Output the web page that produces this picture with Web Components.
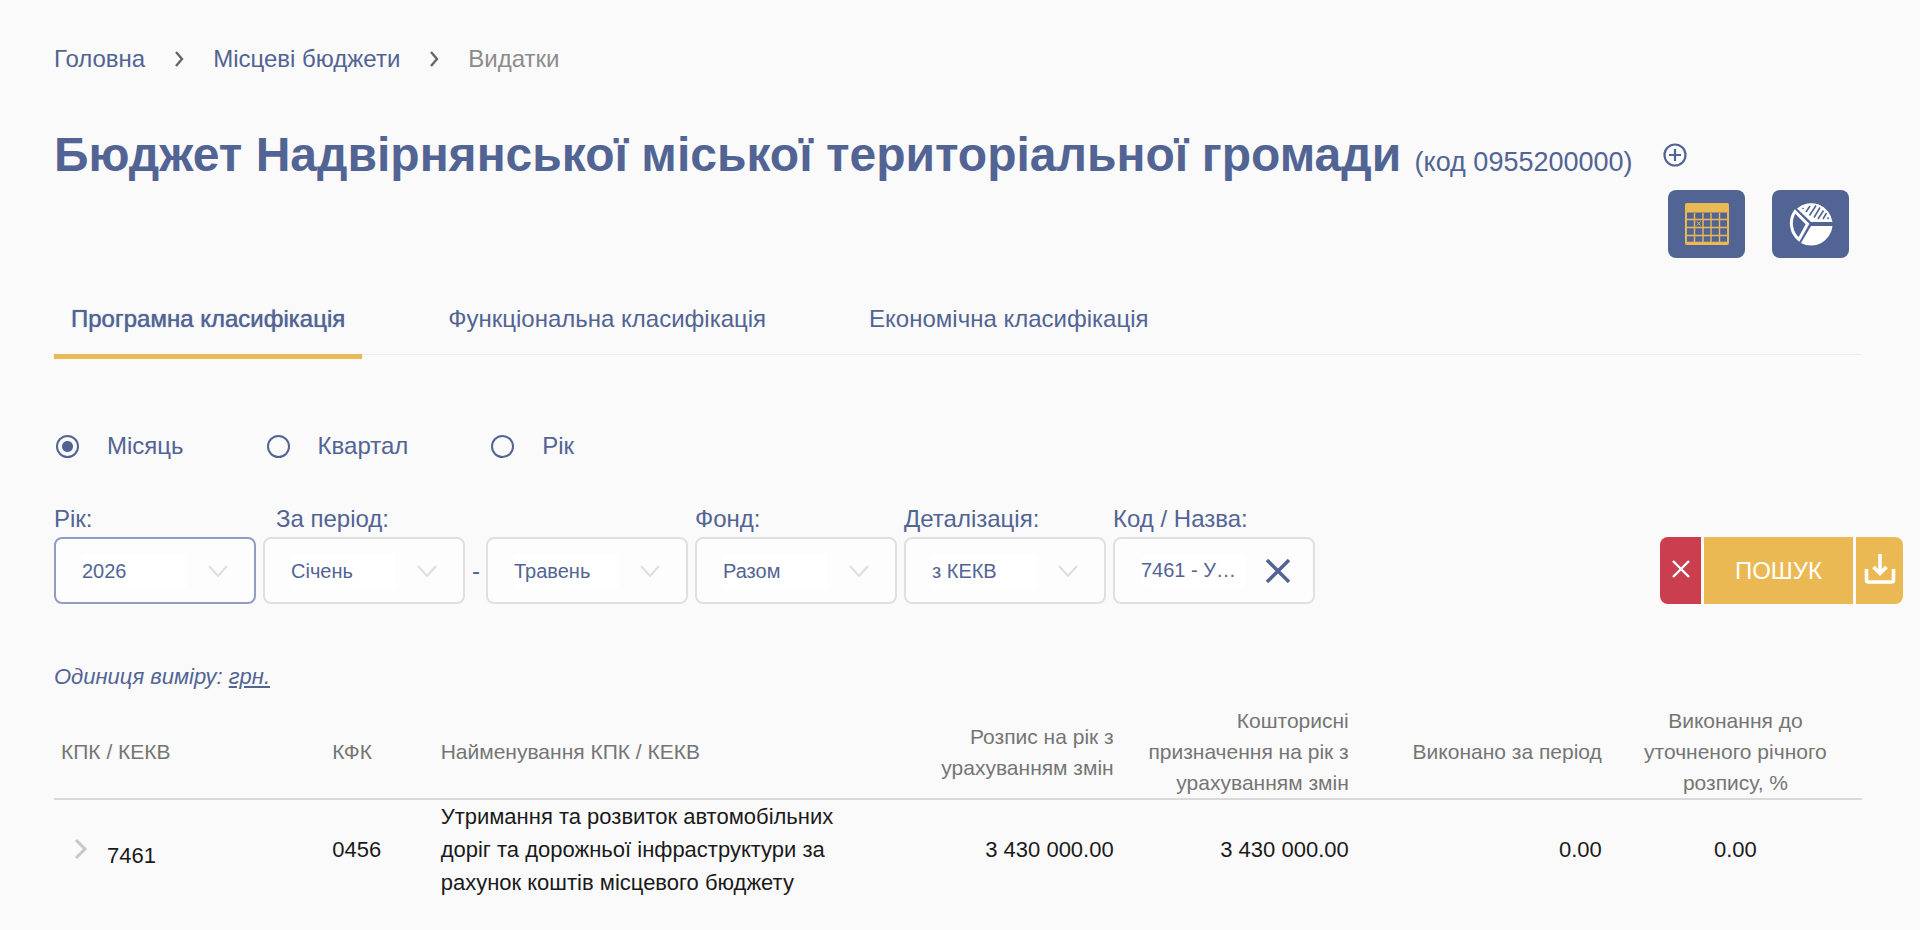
<!DOCTYPE html>
<html lang="uk">
<head>
  <meta charset="utf-8">
  <meta name="viewport" content="width=device-width, initial-scale=1">
  <title>Видатки місцевого бюджету</title>
  <style>
    body {
      margin: 0;
      background-color: #fafafa;
      color: #526494;
      font-family: "Liberation Sans", Arial, sans-serif;
      font-size: 24px;
      line-height: 32px;
    }
  </style>
</head>
<body>
  <budget-page></budget-page>

  <script>
    class BreadCrumbs extends HTMLElement {
      constructor() {
        super();
        this.attachShadow({ mode: 'open' });
      }

      connectedCallback() {
        this.shadowRoot.innerHTML = `
          <style>
            :host {
              display: block;
            }

            nav {
              display: flex;
              align-items: center;
              gap: 29px;
            }

            a {
              color: inherit;
              text-decoration: none;
            }

            span {
              color: #8c8c8c;
            }
          </style>

          <nav>
            <a href="#home">Головна</a>
            <svg width="10" height="16" viewBox="0 0 10 16" fill="none" stroke="#666" stroke-width="2.4"><path d="M2 1l6 7-6 7"/></svg>
            <a href="#local">Місцеві бюджети</a>
            <svg width="10" height="16" viewBox="0 0 10 16" fill="none" stroke="#666" stroke-width="2.4"><path d="M2 1l6 7-6 7"/></svg>
            <span>Видатки</span>
          </nav>`;
      }
    }

    class BudgetTitle extends HTMLElement {
      constructor() {
        super();
        this.attachShadow({ mode: 'open' });
      }

      connectedCallback() {
        this.shadowRoot.innerHTML = `
          <style>
            :host {
              display: flex;
              align-items: center;
              gap: 30px;
            }

            h1 {
              margin: 0;
              font-size: 48px;
              line-height: 56px;
            }

            small {
              font-size: 27px;
              font-weight: normal;
            }

            button {
              display: flex;
              padding: 0 0 8px;
              border: 0;
              background: none;
              color: inherit;
              cursor: pointer;
            }
          </style>

          <h1><slot></slot> <small>(код ${this.getAttribute('code')})</small></h1>
          <button type="button" aria-label="Додати">
            <svg width="24" height="24" viewBox="0 0 24 24" fill="none" stroke="currentColor" stroke-width="2.200"><circle cx="12" cy="12" r="10.500"/><path d="M12 6v12M6 12h12"/></svg>
          </button>`;
      }
    }

    class ViewSwitch extends HTMLElement {
      constructor() {
        super();
        this.attachShadow({ mode: 'open' });
      }

      connectedCallback() {
        this.shadowRoot.innerHTML = `
          <style>
            :host {
              display: flex;
              justify-content: flex-end;
              gap: 27px;
              padding-right: 13px;
            }

            button {
              display: flex;
              align-items: center;
              justify-content: center;
              width: 77px;
              height: 68px;
              padding: 0;
              border: 0;
              border-radius: 8px;
              background-color: #526494;
              cursor: pointer;
            }
          </style>

          <button type="button" aria-label="Таблиця">
            <svg width="44" height="42" viewBox="0 0 44 42" fill="none" stroke="#ebb954">
              <rect x="1" y="1" width="42" height="40" rx="1" stroke-width="2"/>
              <path d="M1 1h42v8H1z" fill="#ebb954"/>
              <path d="M9.500 10v30M18 10v30M26 10v30M34.500 10v30M1 16.500h42M1 24.500h42M1 32.500h42M1 39.500h42" stroke-width="1.400"/>
              <path d="M12 18.500l3.500 4M15.500 18.500l-3.500 4"/>
            </svg>
          </button>
          <button type="button" aria-label="Діаграма">
            <svg width="44" height="46" viewBox="0 0 44 46">
              <path d="M22 21L8 7.500a21.500 21.500 0 0 1 35.500 13.500z" fill="#fff"/>
              <path d="M22 25h21.500A21.500 21.500 0 0 1 12 42z" fill="#fff"/>
              <path d="M6 10.500L18.500 23l-8.500 15.500A21 21 0 0 1 6 10.500z" fill="none" stroke="#fff" stroke-width="3"/>
              <path d="M13.500 8l1-1M17 11l4-6M20.500 14.500l6.500-10M25 16.500l6-10M29 18l5.500-8.500M34 18l3.500-6M38.500 18l1-1.500" stroke="#526494" stroke-width="1.600"/>
            </svg>
          </button>`;
      }
    }

    class TabList extends HTMLElement {
      constructor() {
        super();
        this.attachShadow({ mode: 'open' });
      }

      connectedCallback() {
        this.shadowRoot.innerHTML = `
          <style>
            :host {
              display: block;
            }

            div {
              display: flex;
              gap: 69px;
              height: 54px;
              border-bottom: 1px solid #ececf2;
            }

            button {
              height: 59px;
              padding: 0 17px 17px;
              border: 0;
              border-bottom: 5px solid transparent;
              background: none;
              color: inherit;
              font: inherit;
              cursor: pointer;
            }

            button[aria-selected="true"] {
              border-color: #ebb954;
              text-shadow: 0 0 1px currentColor;
            }
          </style>

          <div role="tablist">
            <button type="button" role="tab" aria-selected="true">Програмна класифікація</button>
            <button type="button" role="tab" aria-selected="false">Функціональна класифікація</button>
            <button type="button" role="tab" aria-selected="false">Економічна класифікація</button>
          </div>`;
      }
    }

    class PeriodKind extends HTMLElement {
      constructor() {
        super();
        this.attachShadow({ mode: 'open' });
      }

      connectedCallback() {
        this.shadowRoot.innerHTML = `
          <style>
            :host {
              display: flex;
              gap: 83px;
              padding-left: 2px;
            }

            label {
              display: flex;
              align-items: center;
              gap: 28px;
            }

            input {
              appearance: none;
              width: 23px;
              height: 23px;
              margin: 0;
              border: 2px solid #526494;
              border-radius: 50%;
            }

            input:checked {
              background: radial-gradient(circle, #526494 0 5px, transparent 6px);
            }
          </style>

          <label><input type="radio" name="kind" checked>Місяць</label>
          <label><input type="radio" name="kind">Квартал</label>
          <label><input type="radio" name="kind">Рік</label>`;
      }
    }

    class SelectField extends HTMLElement {
      constructor() {
        super();
        this.attachShadow({ mode: 'open' });
      }

      connectedCallback() {
        const label = this.getAttribute('label');
        this.shadowRoot.innerHTML = `
          <style>
            :host {
              display: flex;
              flex-direction: column;
              justify-content: flex-end;
              width: 202px;
            }

            label {
              line-height: 36px;
            }

            :host([indent]) label {
              padding-left: 13px;
            }

            .box {
              display: grid;
              align-items: center;
              height: 67px;
              box-sizing: border-box;
              border: 2px solid #e0e0e0;
              border-radius: 8px;
              background-color: #fdfdfd;
            }

            :host([active]) .box {
              border-color: #8f9dc4;
            }

            select {
              grid-area: 1 / 1;
              appearance: none;
              height: 63px;
              padding: 0 60px 0 26px;
              border: 0;
              outline: 0;
              background: linear-gradient(#fff, #fff) 26px center / 104px 34px no-repeat;
              color: inherit;
              font-family: inherit;
              font-size: 20px;
            }

            svg {
              grid-area: 1 / 1;
              justify-self: end;
              margin-right: 26px;
              pointer-events: none;
            }
          </style>

          ${label ? `<label for="field">${label}</label>` : ''}
          <div class="box">
            <select id="field" aria-label="${label || 'По'}"><option>${this.getAttribute('value')}</option></select>
            <svg width="20" height="12" viewBox="0 0 20 12" fill="none" stroke="#dedede" stroke-width="2"><path d="M1 1l9 10 9-10"/></svg>
          </div>`;
      }
    }

    class CodeField extends HTMLElement {
      constructor() {
        super();
        this.attachShadow({ mode: 'open' });
      }

      connectedCallback() {
        this.shadowRoot.innerHTML = `
          <style>
            :host {
              display: block;
              width: 202px;
            }

            label {
              display: block;
              line-height: 36px;
            }

            div {
              display: flex;
              align-items: center;
              justify-content: space-between;
              height: 67px;
              box-sizing: border-box;
              padding: 0 23px 0 26px;
              border: 2px solid #e0e0e0;
              border-radius: 8px;
              background-color: #fdfdfd;
            }

            input {
              width: 104px;
              height: 34px;
              padding: 0;
              border: 0;
              border-radius: 8px;
              outline: 0;
              background: #fff;
              color: inherit;
              font-family: inherit;
              font-size: 20px;
            }

            button {
              display: flex;
              padding: 0;
              border: 0;
              background: none;
              color: inherit;
              cursor: pointer;
            }
          </style>

          <label for="code">${this.getAttribute('label')}</label>
          <div>
            <input id="code" type="text" value="${this.getAttribute('value')}">
            <button type="button" aria-label="Очистити">
              <svg width="24" height="24" viewBox="0 0 24 24" fill="none" stroke="currentColor" stroke-width="3.400"><path d="M1 1l22 22M23 1L1 23"/></svg>
            </button>
          </div>`;
      }
    }

    class FilterActions extends HTMLElement {
      constructor() {
        super();
        this.attachShadow({ mode: 'open' });
      }

      connectedCallback() {
        this.shadowRoot.innerHTML = `
          <style>
            :host {
              display: flex;
              gap: 3px;
              height: 67px;
            }

            button {
              display: flex;
              align-items: center;
              justify-content: center;
              padding: 0;
              border: 0;
              background-color: #ebb954;
              color: #fff;
              font: inherit;
              cursor: pointer;
            }

            .reset {
              width: 41px;
              padding-bottom: 4px;
              border-radius: 8px 0 0 8px;
              background-color: #cb3e4f;
            }

            .search {
              width: 149px;
            }

            .download {
              width: 47px;
              padding-bottom: 4px;
              border-radius: 0 8px 8px 0;
            }
          </style>

          <button class="reset" type="button" aria-label="Скинути">
            <svg width="18" height="18" viewBox="0 0 18 18" fill="none" stroke="currentColor" stroke-width="2.400"><path d="M1 1l16 16M17 1L1 17"/></svg>
          </button>
          <button class="search" type="submit">ПОШУК</button>
          <button class="download" type="button" aria-label="Завантажити">
            <svg width="32" height="32" viewBox="0 0 32 32" fill="none" stroke="currentColor" stroke-width="3.600"><path d="M16 1v20M9.500 14l6.500 6.500 6.500-6.500M2.500 16v11q0 2 2 2h23q2 0 2-2V16"/></svg>
          </button>`;
      }
    }

    class BudgetTable extends HTMLElement {
      constructor() {
        super();
        this.attachShadow({ mode: 'open' });
      }

      connectedCallback() {
        this.shadowRoot.innerHTML = `
          <style>
            :host {
              display: block;
            }

            table {
              width: 100%;
              table-layout: fixed;
              border-collapse: collapse;
            }

            th, td {
              padding: 0 7px;
              text-align: left;
              white-space: nowrap;
            }

            th {
              border-bottom: 2px solid #d9d9d9;
              color: #757575;
              font-size: 21px;
              font-weight: normal;
              line-height: 31px;
            }

            td {
              color: #1a1a1a;
              font-size: 22px;
              line-height: 33px;
            }

            .number {
              text-align: right;
            }

            .percent {
              text-align: center;
            }

            .code {
              display: flex;
              align-items: center;
              gap: 19px;
              padding: 12px 0 0 13px;
            }

            button {
              display: flex;
              padding: 0 0 14px;
              border: 0;
              background: none;
              cursor: pointer;
            }
          </style>

          <table>
            <colgroup>
              <col style="width: 15%">
              <col style="width: 6%">
              <col style="width: 25%">
              <col style="width: 13%">
              <col style="width: 13%">
              <col style="width: 14%">
              <col style="width: 14%">
            </colgroup>
            <thead>
              <tr>
                <th>КПК / КЕКВ</th>
                <th>КФК</th>
                <th>Найменування КПК / КЕКВ</th>
                <th class="number">Розпис на рік з<br>урахуванням змін</th>
                <th class="number">Кошторисні<br>призначення на рік з<br>урахуванням змін</th>
                <th class="number">Виконано за період</th>
                <th class="percent">Виконання до<br>уточненого річного<br>розпису, %</th>
              </tr>
            </thead>
            <tbody>
              <tr>
                <td>
                  <div class="code">
                    <button type="button" aria-label="Розгорнути"><svg width="14" height="20" viewBox="0 0 14 20" fill="none" stroke="#c8c8c8" stroke-width="3"><path d="M2 1l9 9-9 9"/></svg></button>
                    7461
                  </div>
                </td>
                <td>0456</td>
                <td>Утримання та розвиток автомобільних<br>доріг та дорожньої інфраструктури за<br>рахунок коштів місцевого бюджету</td>
                <td class="number">3 430 000.00</td>
                <td class="number">3 430 000.00</td>
                <td class="number">0.00</td>
                <td class="percent">0.00</td>
              </tr>
            </tbody>
          </table>`;
      }
    }

    class BudgetPage extends HTMLElement {
      constructor() {
        super();
        this.attachShadow({ mode: 'open' });
      }

      connectedCallback() {
        this.shadowRoot.innerHTML = `
          <style>
            :host {
              display: block;
              padding: 43px 58px 20px 54px;
            }

            budget-title {
              margin-top: 52px;
            }

            tab-list {
              margin-top: 42px;
            }

            period-kind {
              margin-top: 75px;
            }

            form {
              display: flex;
              align-items: flex-end;
              gap: 7px;
              margin-top: 39px;
            }

            .dash {
              width: 7px;
              line-height: 67px;
            }

            filter-actions {
              margin-left: auto;
              margin-right: -41px;
            }

            .unit {
              margin: 57px 0 0;
              font-size: 22px;
              font-style: italic;
            }

            .unit a {
              color: inherit;
            }

            budget-table {
              margin-top: 12px;
            }
          </style>

          <bread-crumbs></bread-crumbs>
          <budget-title code="0955200000">Бюджет Надвірнянської міської територіальної громади</budget-title>
          <view-switch></view-switch>
          <tab-list></tab-list>
          <period-kind></period-kind>
          <form>
            <select-field label="Рік:" value="2026" active></select-field>
            <select-field label="За період:" value="Січень" indent></select-field>
            <span class="dash">-</span>
            <select-field value="Травень"></select-field>
            <select-field label="Фонд:" value="Разом"></select-field>
            <select-field label="Деталізація:" value="з КЕКВ"></select-field>
            <code-field label="Код / Назва:" value="7461 - У…"></code-field>
            <filter-actions></filter-actions>
          </form>
          <p class="unit">Одиниця виміру: <a href="#unit">грн.</a></p>
          <budget-table></budget-table>`;
      }
    }

    customElements.define('bread-crumbs', BreadCrumbs);
    customElements.define('budget-title', BudgetTitle);
    customElements.define('view-switch', ViewSwitch);
    customElements.define('tab-list', TabList);
    customElements.define('period-kind', PeriodKind);
    customElements.define('select-field', SelectField);
    customElements.define('code-field', CodeField);
    customElements.define('filter-actions', FilterActions);
    customElements.define('budget-table', BudgetTable);
    customElements.define('budget-page', BudgetPage);
  </script>
</body>
</html>
